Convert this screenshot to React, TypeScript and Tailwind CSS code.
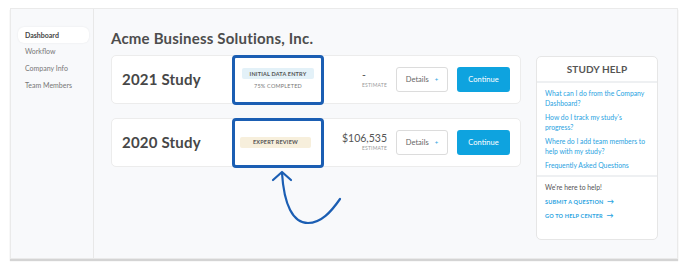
import React from "react";

const font = { fontFamily: "Lato, 'Noto Sans', sans-serif" };

function Card({ title, badge, badgeCls, sub, value }: { title: string; badge: string; badgeCls: string; sub?: string; value: string }) {
  return (
    <div className="flex items-center h-[49px] bg-white border border-[#ececec] rounded-[5px]">
      <div className="w-[120px] pl-[10px] text-[15px] font-bold text-[#474747] tracking-[0.2px]">{title}</div>
      <div className="w-[92px] h-[50px] -my-px border-[3px] border-[#1b5eb3] rounded-[4px] flex flex-col items-center justify-center bg-white">
        <div className={`h-[11px] flex items-center rounded-[2px] text-[5.5px] font-bold tracking-[0.2px] text-[#555] ${badgeCls}`}>{badge}</div>
        {sub && <div className="mt-[3px] text-[5.5px] text-[#777] tracking-[0.2px]">{sub}</div>}
      </div>
      <div className="flex-1 flex justify-end pr-[9px]">
        <div className="flex flex-col">
          <div className="self-start text-[10.5px] text-[#555] leading-[12px]">{value}</div>
          <div className="self-end mt-[1px] text-[5px] text-[#999] tracking-[0.2px]">ESTIMATE</div>
        </div>
      </div>
      <div className="w-[52px] h-[25px] border border-[#dcdcdc] rounded-[3px] flex items-center justify-center gap-[6px] text-[7.5px] text-[#666]">
        <span>Details</span>
        <span className="text-[#2aa3df] text-[6px]">+</span>
      </div>
      <div className="ml-[9px] mr-[10px] w-[53px] h-[25px] rounded-[3px] bg-[#0ea3df] flex items-center justify-center text-[7.5px] text-white">
        Continue
      </div>
    </div>
  );
}

export default function App() {
  return (
    <div className="w-[688px] h-[265px] bg-white pt-[8px] pl-[10px]" style={font}>
      <div className="w-[668px] h-[251px] bg-[#f8f9fb] border border-[#eaeaea] shadow-[0_2px_1px_#d4d4d4] flex">
        <div className="w-[83px] border-r border-[#e8e8e8] pt-[18px] pl-[7px] pr-[4px] flex flex-col">
          <div className="h-[16px] bg-white rounded-[6px] shadow-[0_0_2px_rgba(0,0,0,0.08)] flex items-center pl-[7px] text-[7px] font-bold text-[#444]">Dashboard</div>
          <div className="h-[17px] flex items-center pl-[7px] text-[7px] text-[#777]">Workflow</div>
          <div className="h-[17px] flex items-center pl-[7px] text-[7px] text-[#777]">Company Info</div>
          <div className="h-[17px] flex items-center pl-[7px] text-[7px] text-[#777]">Team Members</div>
        </div>
        <div className="flex-1 pl-[17px] pr-[19px] pt-[19px] flex gap-[15px]">
          <div className="w-[410px] flex flex-col">
            <div className="h-[20px] text-[15px] font-bold text-[#4d4d4d] leading-[20px] tracking-[0.2px]">Acme Business Solutions, Inc.</div>
            <div className="mt-[7px] flex flex-col gap-[14px]">
              <Card title="2021 Study" badge="INITIAL DATA ENTRY" badgeCls="bg-[#e3f1f8] px-[8px]" sub="75% COMPLETED" value="-" />
              <Card title="2020 Study" badge="EXPERT REVIEW" badgeCls="bg-[#f7efdc] px-[13px] -ml-[5px]" value="$106,535" />
            </div>
            <svg width="80" height="60" viewBox="0 0 80 60" className="ml-[160px] mt-[3px] overflow-visible">
              <path d="M69 29 C 60 42, 50 53, 37 53 C 22 53, 13 35, 11 3" fill="none" stroke="#1b5eb3" strokeWidth="2.2" strokeLinecap="round" />
              <path d="M2 10 L 11 2 L 20 10" fill="none" stroke="#1b5eb3" strokeWidth="2.2" strokeLinecap="round" strokeLinejoin="round" />
            </svg>
          </div>
          <div className="mt-[28px] w-[122px] h-[184px] bg-white border border-[#e6e6e6] rounded-[5px] flex flex-col">
            <div className="h-[24px] flex items-center justify-center text-[10px] font-bold text-[#555] tracking-[0.1px]">STUDY HELP</div>
            <div className="h-[2px] bg-[#eef0f2]" />
            <div className="px-[8px] pt-[6px] flex flex-col gap-[5px] text-[6.8px] leading-[9.5px] text-[#2aa3df]">
              <div>What can I do from the Company Dashboard?</div>
              <div>How do I track my study's progress?</div>
              <div>Where do I add team members to help with my study?</div>
              <div>Frequently Asked Questions</div>
            </div>
            <div className="mt-[4px] h-[2px] bg-[#eef0f2]" />
            <div className="px-[8px] pt-[6px] flex flex-col">
              <div className="text-[6.8px] text-[#555] leading-[9.5px]">We're here to help!</div>
              <div className="mt-[5px] text-[5.5px] font-bold text-[#2aa3df] tracking-[0.2px] leading-[8px]">SUBMIT A QUESTION <span className="ml-[2px] text-[7px]">→</span></div>
              <div className="mt-[5px] text-[5.5px] font-bold text-[#2aa3df] tracking-[0.2px] leading-[8px]">GO TO HELP CENTER <span className="ml-[2px] text-[7px]">→</span></div>
            </div>
          </div>
        </div>
      </div>
    </div>
  );
}
